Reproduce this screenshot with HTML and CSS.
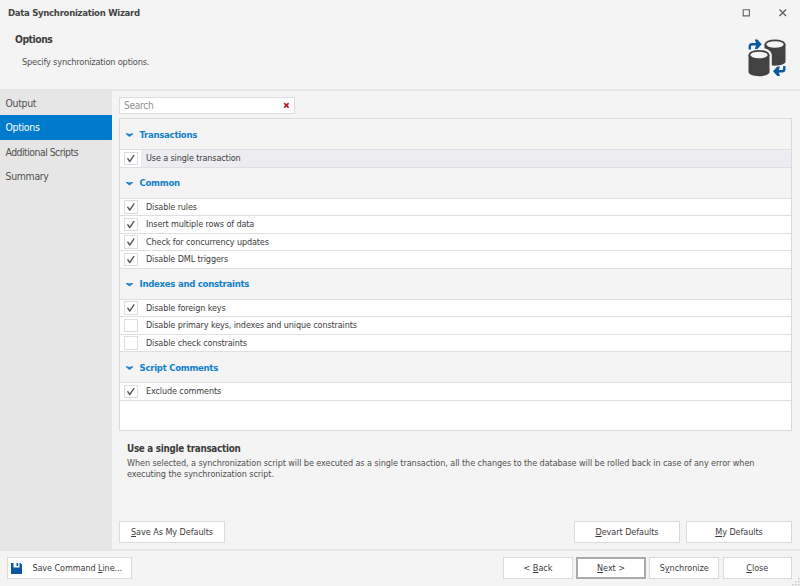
FILE: index.html
```html
<!DOCTYPE html>
<html lang="en">
<head>
    <meta charset="UTF-8">
    <meta name="viewport" content="width=device-width, initial-scale=1.0">
    <title>Data Synchronization Wizard</title>
    <link rel="stylesheet" href="styles.css">
</head>
<body>
<div class="window">

    <!-- Title bar and page heading -->
    <header class="header">
        <div class="titlebar">
            <span class="title">Data Synchronization Wizard</span>
            <svg class="window-buttons" width="46" height="10" viewBox="0 0 46 10" fill="none" stroke="#606060">
                <path d="M1.2 1.7h6.2v6.2H1.2z" stroke-width="1.1"/>
                <path d="M37.5 1.5l6.5 6.5M44 1.5L37.5 8" stroke-width="1.4"/>
            </svg>
        </div>
        <div class="heading">
            <div>
                <h1>Options</h1>
                <p>Specify synchronization options.</p>
            </div>
            <svg class="logo" width="40" height="40" viewBox="0 0 40 40">
                <path d="M17.5 6.5v17c0 2.3 4.800 4.200 10.500 4.200s10.500-1.900 10.500-4.200v-17z" fill="#424242"/>
                <ellipse cx="28" cy="6.5" rx="9.600" ry="4.200" fill="#f4f4f4" stroke="#424242" stroke-width="1.800"/>
                <path d="M-1 16.500C-1 11.500 4 9.800 12 9.800s12.800 2.700 12.800 7.700V39H-1z" fill="#f4f4f4"/>
                <path d="M1.500 17v17c0 2.300 4.700 4.200 10.500 4.200s10.500-1.900 10.500-4.200V17z" fill="#424242"/>
                <ellipse cx="12" cy="17" rx="9.600" ry="4.200" fill="#f4f4f4" stroke="#424242" stroke-width="1.800"/>
                <path d="M2.800 11.500V8.500q0-2.300 2.300-2.300H10" fill="none" stroke="#0b57a4" stroke-width="2.400"/>
                <path d="M7.800 1.500h2.700l4.200 4.700-4.200 4.700H7.800l1.600-4.700z" fill="#0b57a4"/>
                <path d="M37.300 28v3q0 2.300-2.300 2.300H30" fill="none" stroke="#0b57a4" stroke-width="2.400"/>
                <path d="M33 28.600h-2.700L26 33.300l4.300 4.700H33l-1.600-4.700z" fill="#0b57a4"/>
            </svg>
        </div>
    </header>

    <div class="body">
        <nav class="sidebar">
            <div class="step">Output</div>
            <div class="step active">Options</div>
            <div class="step">Additional Scripts</div>
            <div class="step">Summary</div>
        </nav>

        <main class="main">
            <div class="search">
                <span>Search</span>
                <svg width="7" height="7" viewBox="0 0 7 7"><path d="M1.2 1.2l4.400 4.400M5.600 1.2L1.2 5.600" stroke="#b22222" stroke-width="1.700"/></svg>
            </div>

            <!-- Option list -->
            <div class="list">
                <div class="group"><i class="arrow"></i>Transactions</div>
                <div class="row selected"><span class="cell"><i class="check on"></i></span><span class="label">Use a single transaction</span></div>

                <div class="group"><i class="arrow"></i>Common</div>
                <div class="row"><span class="cell"><i class="check on"></i></span><span class="label">Disable rules</span></div>
                <div class="row"><span class="cell"><i class="check on"></i></span><span class="label">Insert multiple rows of data</span></div>
                <div class="row"><span class="cell"><i class="check on"></i></span><span class="label">Check for concurrency updates</span></div>
                <div class="row"><span class="cell"><i class="check on"></i></span><span class="label">Disable DML triggers</span></div>

                <div class="group"><i class="arrow"></i>Indexes and constraints</div>
                <div class="row"><span class="cell"><i class="check on"></i></span><span class="label">Disable foreign keys</span></div>
                <div class="row"><span class="cell"><i class="check"></i></span><span class="label">Disable primary keys, indexes and unique constraints</span></div>
                <div class="row"><span class="cell"><i class="check"></i></span><span class="label">Disable check constraints</span></div>

                <div class="group"><i class="arrow"></i>Script Comments</div>
                <div class="row"><span class="cell"><i class="check on"></i></span><span class="label">Exclude comments</span></div>
            </div>

            <!-- Description of the selected option -->
            <div class="description">
                <h2>Use a single transaction</h2>
                <p>When selected, a synchronization script will be executed as a single transaction, all the changes to the database will be rolled back in case of any error when<br>executing the synchronization script.</p>
            </div>

            <div class="defaults">
                <button class="btn wide save-defaults"><u>S</u>ave As My Defaults</button>
                <button class="btn wide"><u>D</u>evart Defaults</button>
                <button class="btn wide"><u>M</u>y Defaults</button>
            </div>
        </main>
    </div>

    <footer class="footer">
        <button class="btn command">
            <svg width="11" height="11" viewBox="0 0 11 11">
                <path d="M0 0h2.5v4.500h6V0H9.500L11 1.500V11H0z" fill="#0b57a4"/>
                <path d="M5.500 0h1.700v3H5.500z" fill="#0b57a4"/>
            </svg>
            <span>Save Command <u>L</u>ine...</span>
        </button>
        <button class="btn">&lt; <u>B</u>ack</button>
        <button class="btn primary"><u>N</u>ext &gt;</button>
        <button class="btn">S<u>y</u>nchronize</button>
        <button class="btn"><u>C</u>lose</button>
        <svg class="grip" width="8" height="8" viewBox="0 0 8 8" fill="#c8c8cc">
            <path d="M6 0h1.500v1.500H6zM3 3h1.500v1.500H3zM6 3h1.500v1.500H6zM0 6h1.500v1.500H0zM3 6h1.500v1.500H3zM6 6h1.500v1.500H6z"/>
        </svg>
    </footer>

</div>
</body>
</html>
```

FILE: styles.css
```css
* {
    box-sizing: border-box;
}

body {
    margin: 0;
    font-family: "DejaVu Sans Condensed", "DejaVu Sans", sans-serif;
    font-stretch: condensed;
    font-size: 9px;
    color: #3c3c3c;
    background: #f4f4f4;
    white-space: nowrap;
}

h1, h2, p {
    margin: 0;
}

.window {
    width: 800px;
    height: 586px;
    display: flex;
    flex-direction: column;
    overflow: hidden;
}

/* Header */
.header {
    height: 91px;
    border-bottom: 2px solid #e5e5e7;
}

.titlebar {
    height: 26px;
    padding: 0 12px 0 8px;
    display: flex;
    align-items: center;
    justify-content: space-between;
}

.title {
    padding-bottom: 1px;
    font-size: 9.5px;
    font-weight: bold;
    letter-spacing: -0.3px;
    color: #444;
}

.heading {
    display: flex;
    justify-content: space-between;
    padding: 6px 13px 0 15px;
}

.heading h1 {
    font-size: 10.3px;
    line-height: 14px;
    letter-spacing: -0.45px;
}

.heading p {
    margin: 10px 0 0 7px;
    font-size: 9.2px;
    line-height: 12px;
    letter-spacing: -0.2px;
    color: #505050;
}

.logo {
    margin-top: 6px;
}

/* Steps */
.body {
    height: 458px;
    display: flex;
}

.sidebar {
    width: 111.5px;
    background: #e6e6e6;
}

.step {
    height: 24.3px;
    padding-left: 5.5px;
    font-size: 10.4px;
    line-height: 24.5px;
    letter-spacing: -0.52px;
    color: #505050;
}

.step:first-child, .step:nth-child(2), .step:last-child {
    letter-spacing: -0.3px;
}

.step.active {
    background: #007acc;
    color: #fff;
}

.main {
    flex: 1;
    display: flex;
    flex-direction: column;
    padding: 6px 8px 0 7.5px;
}

.search {
    width: 176px;
    height: 17px;
    padding: 0 4px;
    display: flex;
    align-items: center;
    justify-content: space-between;
    border: 1px solid #dcdce0;
    background: #fff;
    font-size: 10px;
    letter-spacing: -0.25px;
    color: #909090;
}

/* Option list */
.list {
    height: 313px;
    margin-top: 4px;
    border: 1px solid #d9d9de;
    background: #fff;
}

.group {
    height: 31px;
    padding-left: 6px;
    display: flex;
    align-items: center;
    border-bottom: 1px solid #dedee3;
    background: #f4f4f4;
    color: #1080cc;
    font-size: 9.5px;
    font-weight: bold;
    letter-spacing: -0.27px;
}

.arrow {
    width: 7px;
    height: 4px;
    margin: 2px 6.5px 0 0;
    background: #2583c4;
    clip-path: polygon(0 0, 50% 25%, 100% 0, 100% 30%, 50% 100%, 0 30%);
}

.row {
    height: 17.5px;
    display: flex;
    border-bottom: 1px solid #dedee3;
}

.cell {
    width: 21px;
    padding: 1.5px 0 0 4px;
}

.check {
    display: block;
    width: 13.5px;
    height: 13.5px;
    border: 1px solid #dcdce2;
    background: #fff;
}

.check.on::after {
    content: "";
    display: block;
    width: 8px;
    height: 8px;
    margin: 2px 0 0 2px;
    background: #555;
    clip-path: polygon(0 52%, 12% 42%, 35% 72%, 84% 0, 97% 8%, 40% 98%, 29% 98%);
}

.label {
    flex: 1;
    padding-left: 5px;
    line-height: 17px;
    letter-spacing: -0.12px;
}

.row.selected .label {
    background: #ececf1;
}

/* Description */
.description {
    padding: 11px 0 0 8px;
}

.description h2 {
    font-size: 9.8px;
    line-height: 14px;
    letter-spacing: -0.28px;
}

.description p {
    margin-top: 2px;
    line-height: 11.3px;
    letter-spacing: -0.075px;
    color: #505050;
}

/* Buttons */
.btn {
    width: 69.5px;
    height: 22px;
    padding: 0;
    border: 1px solid #dadadf;
    background: #fff;
    font: inherit;
    letter-spacing: -0.05px;
    color: #3c3c3c;
}

.btn.wide {
    width: 106px;
}

.defaults {
    margin-top: auto;
    padding-bottom: 6px;
    display: flex;
    gap: 6px;
}

.save-defaults {
    margin-right: auto;
}

.footer {
    position: relative;
    flex: 1;
    display: flex;
    gap: 3.6px;
    padding: 6px 8px 0 7.4px;
    border-top: 2px solid #e5e5e7;
}

.btn.command {
    width: 125px;
    margin-right: auto;
    padding-left: 3px;
    display: flex;
    align-items: center;
    gap: 10px;
    letter-spacing: -0.08px;
}

.btn.primary {
    border: 2px solid #aaa;
}

.grip {
    position: absolute;
    right: 0;
    bottom: 0;
}
```
